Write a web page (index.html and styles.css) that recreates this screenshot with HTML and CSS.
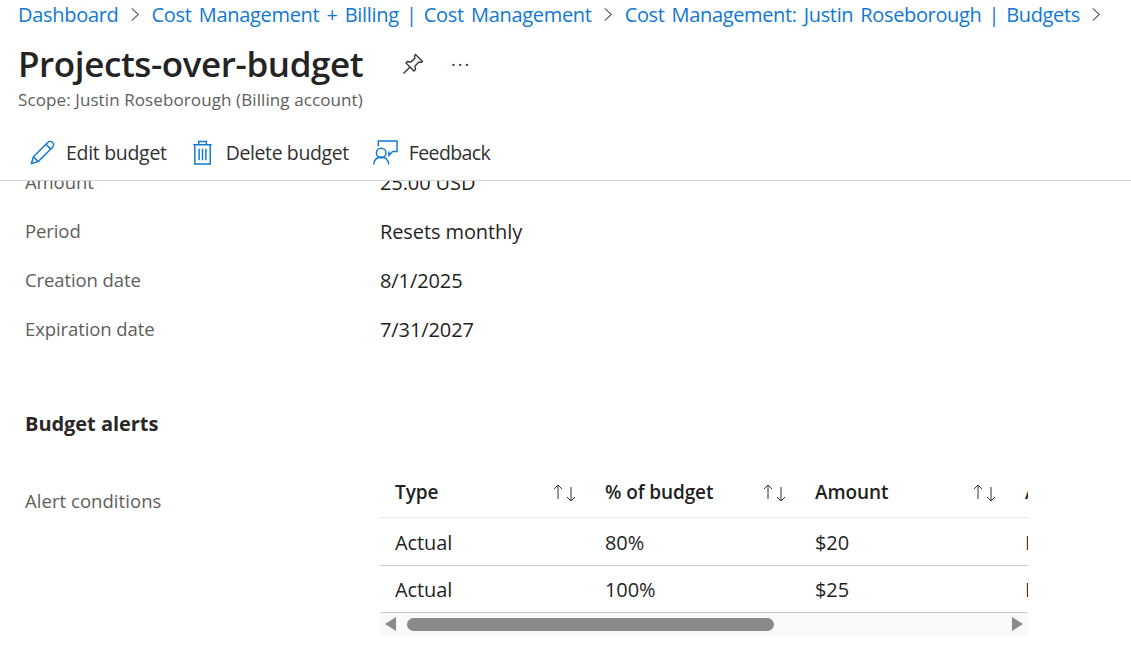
FILE: index.html
```html
<!DOCTYPE html>
<html lang="en">
<head>
<meta charset="UTF-8">
<title>Projects-over-budget</title>
<link rel="stylesheet" href="styles.css">
</head>
<body>
<header class="blade-head">
    <nav class="crumbs">
        <a>Dashboard</a>
        <svg class="chev" viewBox="0 0 10 16"><path d="M1.5 1.5 8.5 8 1.5 14.5"/></svg>
        <a>Cost Management + Billing | Cost Management</a>
        <svg class="chev" viewBox="0 0 10 16"><path d="M1.5 1.5 8.5 8 1.5 14.5"/></svg>
        <a class="crumb-last">Cost Management: Justin Roseborough | Budgets</a>
        <svg class="chev" viewBox="0 0 10 16"><path d="M1.5 1.5 8.5 8 1.5 14.5"/></svg>
    </nav>
    <div class="title-row">
        <h1>Projects-over-budget</h1>
        <svg class="pin" viewBox="0 0 22 22"><path d="M13.5 1.5 20.5 8.5 19 9.5 17 9 13 13 13.5 16.5 12 18 4 10 5.5 8.5 9 9 13 5 12.5 3ZM8 14 1.5 20.5"/></svg>
        <span class="more">···</span>
    </div>
    <p class="scope">Scope: Justin Roseborough (Billing account)</p>
    <div class="toolbar">
        <button class="tool">
            <svg viewBox="0 0 26 26"><path d="M1.500 24.500 3.500 17.500 18.500 2.500a2.800 2.800 0 0 1 5 5L8.500 22.500ZM3.500 17.500 8.500 22.500M16.500 4.500 21.500 9.500"/></svg>
            Edit budget
        </button>
        <button class="tool tool-del">
            <svg viewBox="0 0 21 26"><path d="M1 5h19M6.500 5V1.500h8V5M2.500 5v20h16V5M7 9v12M10.500 9v12M14 9v12"/></svg>
            Delete budget
        </button>
        <button class="tool tool-fb">
            <svg viewBox="0 0 26 26"><path d="M5.500 6.500V1h19.500v11h-4.500l-4 4v-4"/><circle cx="8.500" cy="13.500" r="5"/><path d="M.8 25.500c0-10.500 15.500-10.500 15.500 0"/></svg>
            Feedback
        </button>
    </div>
</header>

<main class="blade-body">
    <dl class="summary">
        <dt>Amount</dt><dd>25.00 USD</dd>
        <dt>Period</dt><dd>Resets monthly</dd>
        <dt>Creation date</dt><dd>8/1/2025</dd>
        <dt>Expiration date</dt><dd>7/31/2027</dd>
    </dl>

    <h2>Budget alerts</h2>

    <div class="alerts">
        <div class="alerts-label">Alert conditions</div>
        <div class="grid-wrap">
            <table class="grid">
                <thead>
                    <tr>
                        <th><span>Type</span><svg class="sort" viewBox="0 0 26 18"><path d="M6 15V1M2 5 6 1l4 4M19 3v14M15 13l4 4 4-4"/></svg></th>
                        <th><span>% of budget</span><svg class="sort" viewBox="0 0 26 18"><path d="M6 15V1M2 5 6 1l4 4M19 3v14M15 13l4 4 4-4"/></svg></th>
                        <th><span>Amount</span><svg class="sort" viewBox="0 0 26 18"><path d="M6 15V1M2 5 6 1l4 4M19 3v14M15 13l4 4 4-4"/></svg></th>
                        <th><span>Alerts</span></th>
                    </tr>
                </thead>
                <tbody>
                    <tr><td>Actual</td><td>80%</td><td>$20</td><td>Enabled</td></tr>
                    <tr><td>Actual</td><td>100%</td><td>$25</td><td>Enabled</td></tr>
                </tbody>
            </table>
            <div class="hscroll">
                <span class="arrow arrow-left"></span>
                <span class="track"><span class="thumb"></span></span>
                <span class="arrow arrow-right"></span>
            </div>
        </div>
    </div>
</main>
</body>
</html>
```

FILE: styles.css
```css
* {
  box-sizing: border-box;
}
html, body {
  height: 100%;
}
body {
  margin: 0;
  overflow: hidden;
  background-color: #fff;
  color: #1f1f1f;
  font-family: "Open Sans", "Liberation Sans", sans-serif;
  display: flex;
  flex-direction: column;
}

/* header */
.blade-head {
  height: 181px;
  flex: none;
  padding-left: 18px;
  border-bottom: 1px solid #d2d2d2;
  position: relative;
  z-index: 1;
  background-color: #fff;
}
.crumbs {
  display: flex;
  align-items: center;
  height: 28px;
  font-size: 20px;
  letter-spacing: -0.3px;
  word-spacing: 2.2px;
  color: #0f78d4;
  white-space: nowrap;
}
.crumb-last {
  letter-spacing: -0.35px;
}
.chev {
  width: 10px;
  height: 15px;
  margin: 0 11.500px;
  fill: none;
  stroke: #605e5c;
  stroke-width: 1.2;
}
.title-row {
  display: flex;
  align-items: center;
  height: 49px;
  margin-top: 11px;
}
h1 {
  margin: 0;
  font-size: 35px;
  font-weight: 600;
  letter-spacing: -0.4px;
  color: #242424;
  width: 384px;
  white-space: nowrap;
}
.pin {
  width: 22px;
  height: 22px;
  fill: none;
  stroke: #323130;
  stroke-width: 1.3;
}
.more {
  margin-left: 27px;
  font-size: 18px;
  letter-spacing: 2px;
  color: #323130;
  line-height: 1;
}
.scope {
  margin: 2px 0 0;
  height: 20px;
  font-size: 17px;
  line-height: 20px;
  letter-spacing: 0.1px;
  color: #605e5c;
}
.toolbar {
  display: flex;
  align-items: center;
  margin-top: 29px;
  padding-left: 12px;
}
.tool {
  display: flex;
  align-items: center;
  gap: 11px;
  padding: 0;
  border: none;
  background: none;
  font: inherit;
  font-size: 19.500px;
  letter-spacing: -0.3px;
  color: #323130;
  white-space: nowrap;
}
.tool svg {
  width: 25px;
  height: 25px;
  fill: none;
  stroke: #0f78d4;
  stroke-width: 1.500;
}
.tool-del {
  margin-left: 25px;
  gap: 13px;
  letter-spacing: -0.4px;
}
.tool-del svg {
  width: 21px;
}
.tool-fb {
  margin-left: 24px;
  letter-spacing: -0.6px;
}

/* body */
.blade-body {
  flex: 1;
  overflow: hidden;
  padding-left: 25px;
  font-size: 18.500px;
  letter-spacing: -0.1px;
}
.summary {
  display: grid;
  grid-template-columns: 355px 1fr;
  grid-auto-rows: 49px;
  align-items: center;
  margin: -23px 0 0;
}
dt {
  padding-bottom: 2px;
  color: #605e5c;
}
dd {
  margin: 0;
  font-size: 20px;
  letter-spacing: -0.1px;
  color: #1f1f1f;
}
h2 {
  margin: 56px 0 0;
  font-size: 20px;
  font-weight: 700;
  letter-spacing: -0.05px;
  color: #292827;
  line-height: 28px;
}
.alerts {
  display: flex;
  margin-top: 24px;
}
.alerts-label {
  width: 355px;
  padding-top: 26px;
  color: #605e5c;
  letter-spacing: 0.05px;
}
.grid-wrap {
  width: 648px;
  overflow: hidden;
}
.grid {
  border-collapse: collapse;
  table-layout: fixed;
  width: 840px;
}
.grid th, .grid td {
  width: 210px;
  padding: 0 15px;
  text-align: left;
  white-space: nowrap;
  color: #1f1f1f;
}
.grid th {
  height: 55px;
  padding-top: 6px;
  font-weight: 600;
  font-size: 19px;
  letter-spacing: -0.1px;
  border-bottom: 1px solid #edebe9;
  position: relative;
}
.grid td {
  height: 48px;
  padding-top: 2px;
  font-size: 20px;
  letter-spacing: -0.1px;
  border-bottom: 1px solid #c8c8c8;
}
.grid tr:last-child td {
  height: 47px;
}
.sort {
  position: absolute;
  right: 12px;
  top: 22px;
  width: 26px;
  height: 18px;
  fill: none;
  stroke: #323130;
  stroke-width: 1;
}
.hscroll {
  display: flex;
  align-items: center;
  height: 23px;
  padding: 0 5px;
  background-color: #fafafa;
}
.arrow {
  width: 0;
  height: 0;
  border-top: 7px solid transparent;
  border-bottom: 7px solid transparent;
}
.arrow-left {
  border-right: 11px solid #8a8a8a;
}
.arrow-right {
  border-left: 11px solid #8a8a8a;
}
.track {
  flex: 1;
  padding: 0 238px 0 11px;
}
.thumb {
  display: block;
  height: 13px;
  border-radius: 7px;
  background-color: #8a8a8a;
}
```
